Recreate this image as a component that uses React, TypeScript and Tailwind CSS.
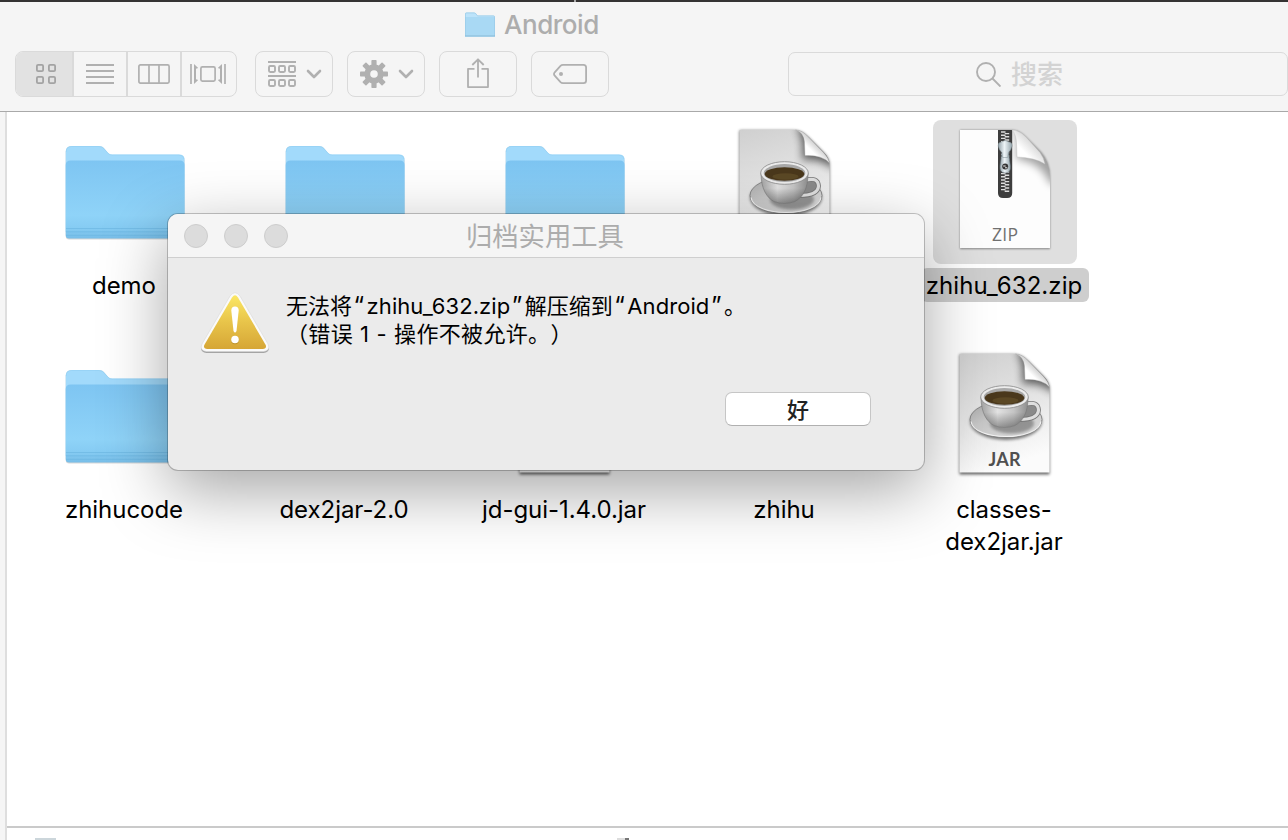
import React, { useId } from "react";

type Kind = "folder" | "jar" | "plain-jar" | "zip";
type Item = { kind: Kind; label: string[]; selected?: boolean };

const items: Item[] = [
  { kind: "folder", label: ["demo"] },
  { kind: "folder", label: [] },
  { kind: "folder", label: [] },
  { kind: "plain-jar", label: [] },
  { kind: "zip", label: ["zhihu_632.zip"], selected: true },
  { kind: "folder", label: ["zhihucode"] },
  { kind: "folder", label: ["dex2jar-2.0"] },
  { kind: "jar", label: ["jd-gui-1.4.0.jar"] },
  { kind: "folder", label: ["zhihu"] },
  { kind: "jar", label: ["classes-", "dex2jar.jar"] },
];

function FolderIcon() {
  const id = useId();
  return (
    <svg width="144" height="144" viewBox="0 0 144 144">
      <defs>
        <linearGradient id={id} x1="0" y1="0" x2="0" y2="1">
          <stop offset="0" stopColor="#7ec5f2" />
          <stop offset="0.7" stopColor="#8fd3f8" />
          <stop offset="0.86" stopColor="#86ccf3" />
          <stop offset="1" stopColor="#78bee8" />
        </linearGradient>
      </defs>
      <path d="M12.700 113V32q0-6 6-6h27q4 0 6 3l3.500 4.500q1.500 1.500 4 1.500H126q5.500 0 5.500 5V116q0 3.500-3.500 3.500H16.200Q12.700 119.500 12.700 116z" fill="#000" opacity=".16" />
      <path d="M12.700 112V32q0-6 6-6h27q4 0 6 3l3.500 4q1.500 1.500 4 1.500H126q5.500 0 5.500 5V112H12.700z" fill="#a2dafb" />
      <path d="M13.200 32q0-5.500 5.500-5.500h27q4 0 6 3l3.500 4q1.500 1.500 4 1.500H126q4.500 0 5 4" fill="none" stroke="#8fcdf1" strokeWidth=".5" />
      <path d="M12.700 45q0-4.500 5-4.500h109q4.800 0 4.800 4.500v70q0 3.500-3.500 3.500H16.200Q12.700 118.500 12.700 115z" fill={`url(#${id})`} />
      <path d="M13 108.500h118.500M13 111.800h118.500M13 115.300h118.500" stroke="#62aedc" strokeWidth=".8" opacity=".6" />
    </svg>
  );
}

function JarIcon({ text }: { text: boolean }) {
  const id = useId();
  return (
    <svg width="144" height="144" viewBox="0 0 144 144">
      <defs>
        <linearGradient id={id + "p"} x1="0" y1="0" x2="0.25" y2="1">
          <stop offset="0" stopColor="#cfcfcf" />
          <stop offset=".5" stopColor="#e3e3e3" />
          <stop offset="1" stopColor="#fbfbfb" />
        </linearGradient>
        <linearGradient id={id + "c"} x1="0" y1="0" x2="1" y2="0">
          <stop offset="0" stopColor="#a2a2a2" />
          <stop offset=".35" stopColor="#e2e2e2" />
          <stop offset=".7" stopColor="#c4c4c4" />
          <stop offset="1" stopColor="#8e8e8e" />
        </linearGradient>
        <linearGradient id={id + "d"} x1="0" y1="0" x2="0" y2="1">
          <stop offset="0" stopColor="#000" stopOpacity="0" />
          <stop offset=".5" stopColor="#000" stopOpacity="0" />
          <stop offset="1" stopColor="#000" stopOpacity=".35" />
        </linearGradient>
        <linearGradient id={id + "s"} x1="0" y1="0" x2=".9" y2="1">
          <stop offset="0" stopColor="#a5a5a5" />
          <stop offset=".4" stopColor="#c6c6c6" />
          <stop offset="1" stopColor="#dddddd" />
        </linearGradient>
        <linearGradient id={id + "f"} x1="0" y1="1" x2=".6" y2=".4">
          <stop offset="0" stopColor="#fff" />
          <stop offset=".7" stopColor="#fff" />
          <stop offset="1" stopColor="#ccc" />
        </linearGradient>
        <filter id={id + "b"} x="-20%" y="-20%" width="140%" height="140%"><feGaussianBlur stdDeviation="1.5" /></filter>
        <filter id={id + "g"} x="-50%" y="-50%" width="200%" height="200%"><feGaussianBlur stdDeviation="4" /></filter>
        <clipPath id={id + "k"}><path d="M26.500 10h56q6 0 13 7l15 15q6 6 6 12v84.500h-90z" /></clipPath>
      </defs>
      <path d="M26.500 10.500h56q6 0 13 7l15 15q6 6 6 12v86h-90z" fill="#000" opacity=".6" filter={`url(#${id}b)`} />
      <g clipPath={`url(#${id}k)`}>
        <path d="M26 9h93v121H26z" fill={`url(#${id}p)`} />
        <path d="M84 6q8 16 5 34 18-3 34 10V6z" fill="#000" opacity=".6" filter={`url(#${id}g)`} />
      </g>
      <path d="M82.500 10q8 2 9 12l.5 13.500q17-1 24.500 7.500-1-5-6-10.500L95.500 17Q89 10 82.500 10z" fill={`url(#${id}f)`} stroke="#aaa" strokeWidth=".4" />
      <ellipse cx="73" cy="77.500" rx="36" ry="18.500" fill="#000" opacity=".5" filter={`url(#${id}b)`} />
      <ellipse cx="73" cy="75.500" rx="36" ry="18" fill={`url(#${id}s)`} stroke="#777" strokeWidth=".8" />
      <path d="M38 77.500c3 20 67 20 70 0" fill="none" stroke="#f2f2f2" strokeWidth="1.200" />
      <ellipse cx="79" cy="79.500" rx="22" ry="10" fill="#444" opacity=".45" filter={`url(#${id}b)`} />
      <path d="M92 60.500q13-4 13.500 5.500-.5 9.500-19 9.500" fill="#8a8a8a" stroke="#777" strokeWidth="4.800" />
      <path d="M92 60.500q13-4 13.500 5.500-.5 9.500-19 9.500" fill="none" stroke="#dedede" strokeWidth="3.200" />
      <path d="M48 53c0 16 6 25 13 28.500q10.500 4 21 0C90 77 95 69 95 53z" fill={`url(#${id}c)`} />
      <path d="M48 53c0 16 6 25 13 28.500q10.500 4 21 0C90 77 95 69 95 53z" fill={`url(#${id}d)`} stroke="#777" strokeWidth=".6" />
      <ellipse cx="71.500" cy="53" rx="23.800" ry="11.300" fill="#ececec" stroke="#888" strokeWidth=".8" />
      <ellipse cx="71.500" cy="53" rx="20.800" ry="9" fill="#a9a9a9" />
      <ellipse cx="71.500" cy="54" rx="19.800" ry="6.800" fill="#4a381c" />
      <ellipse cx="72.500" cy="56.500" rx="13" ry="3.200" fill="#5b4825" />
      {text && <text x="71.500" y="122" textAnchor="middle" fontFamily="Lato" fontWeight="700" fontSize="18" fill="#505050" textLength="32">JAR</text>}
    </svg>
  );
}

function ZipIcon() {
  const id = useId();
  const teeth = Array.from({ length: 19 }, (_, i) => 12 + i * 3.2);
  return (
    <svg width="144" height="144" viewBox="0 0 144 144">
      <defs>
        <filter id={id + "b"} x="-20%" y="-20%" width="140%" height="140%"><feGaussianBlur stdDeviation="1" /></filter>
        <filter id={id + "g"} x="-50%" y="-50%" width="200%" height="200%"><feGaussianBlur stdDeviation="4" /></filter>
        <clipPath id={id + "k"}><path d="M27 10h52q7 0 14 7l15 15q9 10 9 25v71H27z" /></clipPath>
        <linearGradient id={id + "f"} x1="0" y1="1" x2=".6" y2=".4">
          <stop offset="0" stopColor="#fff" />
          <stop offset=".6" stopColor="#fff" />
          <stop offset="1" stopColor="#ddd" />
        </linearGradient>
        <linearGradient id={id + "m"}>
          <stop offset="0" stopColor="#93a1a8" />
          <stop offset=".45" stopColor="#edf4f7" />
          <stop offset="1" stopColor="#94a4ab" />
        </linearGradient>
      </defs>
      <path d="M27 10h52q7 0 14 7l15 15q9 10 9 25v72H27z" fill="#000" opacity=".4" filter={`url(#${id}b)`} />
      <g clipPath={`url(#${id}k)`}>
        <path d="M27 9h92v121H27z" fill="#fdfdfd" />
        <path d="M80 8q7 15 3 31 26 3 34 25h10V8z" fill="#000" opacity=".36" filter={`url(#${id}g)`} />
        <path d="M65 9h14.200v64q0 5-5 5h-4.200q-5 0-5-5z" fill="#3d3d3d" />
        {teeth.map((y, i) => (
          <path key={i} d={`M68 ${y}h4.500M71.700 ${y + 1.6}h4.500`} stroke="#dcdcdc" strokeWidth="1.400" />
        ))}
      </g>
      <path d="M79 10q4 4 4.500 13l.5 14q18 .5 28 7-1-6-5-11.500L93 17Q86 10 79 10z" fill={`url(#${id}f)`} stroke="#bbb" strokeWidth=".4" />
      <path d="M69 32h6.400l2 14q.6 7-5.200 7t-5.200-7z" fill={`url(#${id}m)`} stroke="#637078" strokeWidth=".5" />
      <path d="M65.200 26q-.5-3.500 3-4 3.900-3 7.900 0 3.400.5 3 4-1 4.500-3.700 6.500l-.8 5h-4.900l-.8-5q-2.700-2-3.700-6.500z" fill={`url(#${id}m)`} stroke="#7f8c93" strokeWidth=".5" />
      <circle cx="72.200" cy="46.500" r="3" fill="#353535" />
      <path d="M70.200 46h2.500M72 47.800h2.300" stroke="#eee" strokeWidth="1" />
      <text x="72" y="121" textAnchor="middle" fontFamily="Open Sans" fontSize="17.500" fill="#707070" textLength="26">ZIP</text>
    </svg>
  );
}

function FileCell({ item }: { item: Item }) {
  return (
    <div className="flex h-56 w-[220px] flex-col items-center pt-2">
      <div className={item.selected ? "h-36 w-36 rounded-lg bg-[#dfdfdf]" : "h-36 w-36"}>
        {item.kind === "folder" && <FolderIcon />}
        {item.kind === "jar" && <JarIcon text />}
        {item.kind === "plain-jar" && <JarIcon text={false} />}
        {item.kind === "zip" && <ZipIcon />}
      </div>
      <div
        className={
          "mt-1 whitespace-nowrap rounded-md pr-[7px] pl-[5px] pt-0.5 text-center text-[24px] font-[430] leading-8 text-black " +
          (item.selected ? "h-[34px] bg-[#cecece] tracking-[0.003em]" : "tracking-[-0.002em]")
        }
      >
        {item.label.map((l) => (
          <div key={l}>{l}</div>
        ))}
      </div>
    </div>
  );
}

const btn = "flex h-[46px] w-[78px] items-center rounded-[8px] border border-[#dadada] text-[#b0b0b0]";

function Chevron() {
  return (
    <svg width="16" height="10" viewBox="0 0 16 10" fill="none" stroke="currentColor" strokeWidth="2.600" strokeLinecap="round" strokeLinejoin="round">
      <path d="M2 2l6 6 6-6" />
    </svg>
  );
}

function Toolbar() {
  return (
    <div className="flex h-[61px] pt-2 pl-[15px]">
      <div className="flex h-[46px] w-[222px] overflow-hidden rounded-[8px] border border-[#dadada] text-[#b0b0b0]">
        <div className="flex w-[58px] items-center border-r-2 border-[#dadada] bg-[#e2e2e2] pl-5 text-[#a3a3a3]">
          <svg width="20" height="20" fill="none" stroke="currentColor" strokeWidth="1.800">
            <rect x=".9" y=".9" width="6.200" height="6.200" rx="1.200" />
            <rect x="12.900" y=".9" width="6.200" height="6.200" rx="1.200" />
            <rect x=".9" y="12.900" width="6.200" height="6.200" rx="1.200" />
            <rect x="12.900" y="12.900" width="6.200" height="6.200" rx="1.200" />
          </svg>
        </div>
        <div className="flex w-[54px] items-center border-r-2 border-[#dadada] pl-3">
          <svg width="28" height="20" stroke="currentColor" strokeWidth="1.900"><path d="M0 1h28M0 7h28M0 13h28M0 19h28" /></svg>
        </div>
        <div className="flex w-[54px] items-center border-r-2 border-[#dadada] pl-2.5">
          <svg width="32" height="20" fill="none" stroke="currentColor" strokeWidth="1.700"><rect x=".9" y=".9" width="30.200" height="18.200" rx="1.500" /><path d="M11 1v18M21 1v18" /></svg>
        </div>
        <div className="flex items-center pl-2">
          <svg width="36" height="20" fill="none" stroke="currentColor" strokeWidth="1.700">
            <path d="M1 0v20M35 0v20" />
            <path d="M4 0l4.200 4-2.200.8v10.400l2.200.8L4 20zM32 0l-4.200 4 2.200.8v10.400l-2.200.8L32 20z" fill="currentColor" stroke="none" />
            <rect x="10.900" y="2.900" width="14.200" height="14.200" rx="1.500" />
          </svg>
        </div>
      </div>

      <div className={btn + " ml-[18px] pl-3"}>
        <svg width="28" height="26" fill="none" stroke="currentColor" strokeWidth="1.900">
          <path d="M0 1h28M0 15h28" />
          <rect x="1" y="5" width="6" height="6" rx="1.200" /><rect x="11" y="5" width="6" height="6" rx="1.200" /><rect x="21" y="5" width="6" height="6" rx="1.200" />
          <rect x="1" y="19" width="6" height="6" rx="1.200" /><rect x="11" y="19" width="6" height="6" rx="1.200" /><rect x="21" y="19" width="6" height="6" rx="1.200" />
        </svg>
        <div className="ml-2.5 pt-px"><Chevron /></div>
      </div>

      <div className={btn + " ml-3.5 pl-3"}>
        <svg width="28" height="28" viewBox="-14 -14 28 28">
          <g fill="currentColor">
            {[0, 45, 90, 135].map((a) => (
              <rect key={a} x="-2.600" y="-14" width="5.200" height="28" rx=".8" transform={`rotate(${a})`} />
            ))}
            <circle r="9.700" />
          </g>
          <circle r="3.800" fill="#f5f5f5" />
        </svg>
        <div className="ml-2.5 pt-px"><Chevron /></div>
      </div>

      <div className={btn + " ml-3.5 pl-[27px]"}>
        <svg width="22" height="30" fill="none" stroke="currentColor" strokeWidth="1.800" strokeLinejoin="round" className="-mt-0.5">
          <path d="M7.500 10.900H1v18.200h20V10.900h-6.500M11 19.500V1.500M5.300 7L11 1.300 16.700 7" />
        </svg>
      </div>

      <div className={btn + " ml-3.5 pl-[21px]"}>
        <svg width="34" height="20" fill="none" stroke="currentColor" strokeWidth="1.800">
          <path d="M10 .9h20.500q2.600 0 2.600 2.600v13q0 2.600-2.600 2.600H10q-1.500 0-2.500-1L1.700 11.700q-1.400-1.700 0-3.400L7.500 1.900Q8.500.9 10 .9z" />
          <circle cx="8" cy="10" r="2" fill="currentColor" stroke="none" />
        </svg>
      </div>

      <div className="mt-px ml-[179px] flex h-11 w-[500px] items-center rounded-[7px] border border-[#dadada] pl-[187px] text-[#b0b0b0]">
        <svg width="25" height="25" fill="none" stroke="currentColor" strokeWidth="1.900" className="mt-0.5"><circle cx="10" cy="10" r="9" /><path d="M16.500 16.500l8 8" /></svg>
        <span className="ml-2.5 pt-[3px] text-[26px] font-medium leading-8 text-[#d3d3d3]">搜索</span>
      </div>
    </div>
  );
}

function Quoted({ children }: { children: React.ReactNode }) {
  return (
    <>
      <span className="mr-[2.500px] ml-[1.500px] text-[24px] leading-none">“</span>
      <span className="tracking-[0.003em]">{children}</span>
      <span className="mr-[2.500px] ml-[1.500px] text-[24px] leading-none">”</span>
    </>
  );
}

function Alert() {
  return (
    <div className="absolute top-[214px] left-[168px] h-[256px] w-[756px] rounded-[10px] bg-[#ebebeb] shadow-[0_0_0_1px_rgba(0,0,0,0.22),0_20px_66px_rgba(0,0,0,0.36)]">
      <div className="flex h-11 items-center rounded-t-[10px] border-b border-[#cfcfcf] bg-[#f5f5f5] pl-4">
        <div className="flex gap-4">
          <span className="h-6 w-6 rounded-full border border-[#cdcdcd] bg-[#dcdcdc]" />
          <span className="h-6 w-6 rounded-full border border-[#cdcdcd] bg-[#dcdcdc]" />
          <span className="h-6 w-6 rounded-full border border-[#cdcdcd] bg-[#dcdcdc]" />
        </div>
        <div className="ml-[178px] pt-0.5 text-[26.300px] leading-8 text-[#acacac]">归档实用工具</div>
      </div>
      <div className="flex pt-8 pl-8">
        <svg width="70" height="66" viewBox="0 -1 70 66">
          <defs>
            <linearGradient id="warn" x1="0" y1="0" x2="0" y2="1">
              <stop offset="0" stopColor="#fbe764" />
              <stop offset=".5" stopColor="#e8c44a" />
              <stop offset="1" stopColor="#d6a636" />
            </linearGradient>
          </defs>
          <path d="M30 5.500q5-6.500 10 0L68 54q3 6.500-4.500 7.500h-57Q-1 60.500 2 54z" fill="#000" opacity=".3" transform="translate(0 .6)" />
          <path d="M30 5q5-6.500 10 0L68 53q3 6.500-4.500 7.500h-57Q-1 59.500 2 53z" fill="#fafafa" stroke="#d4d4d4" strokeWidth=".5" />
          <path d="M32 6.500q3-4.500 6 0L65.700 54q1.300 3.500-3 4H7.300q-4.300-.5-3-4z" fill="url(#warn)" />
          <path d="M31.300 19.500q0-4 3.700-4t3.700 4L36.500 40q-1.500 3-3 0z" fill="#fff" />
          <circle cx="35" cy="49.300" r="3.900" fill="#a07a20" opacity=".5" />
          <circle cx="35" cy="48.500" r="3.800" fill="#fff" />
        </svg>
        <div className="ml-4 whitespace-nowrap pt-0.5 text-[22px] font-[430] leading-7 text-black [text-spacing-trim:space-all] [word-spacing:0.600px]">
          <div className="h-7">无法将<Quoted>zhihu_632.zip</Quoted>解压缩到<Quoted>Android</Quoted>。</div>
          <div className="tracking-[0.015em]">（错误 1 - 操作不被允许。）</div>
        </div>
      </div>
      <div className="mt-9 flex justify-end pr-[53px]">
        <button className="h-[34px] w-[146px] rounded-[7px] border border-[#c6c6c6] border-b-[#b0b0b0] bg-white pt-0.5 text-[22px] font-medium leading-7 text-[#222]">好</button>
      </div>
    </div>
  );
}

export default function App() {
  return (
    <div className="relative flex h-[840px] w-[1288px] flex-col overflow-hidden bg-white font-['Inter','Noto_Sans_CJK_SC',sans-serif]">
      <div className="flex h-0.5 bg-[#353333] pl-[574px]"><span className="h-0.5 w-0.5 bg-[#aaa]" /></div>
      <div className="flex h-[110px] flex-col border-b border-[#a9a9a9] bg-[#f5f5f5]">
        <div className="flex h-[41px] items-center pl-[465px]">
          <svg width="30" height="26" viewBox="0 0 30 26" className="mt-1.5">
            <path d="M0 25V2Q0 .5 1.500.5h7.500q1 0 1.800.8l1.700 2.200H28.500Q30 3.500 30 5v20z" fill="#bce3fa" />
            <path d="M0 6q0-1 1-1h28q1 0 1 1v18H0z" fill="#a9d9f4" />
            <path d="M.4 24V2Q.4.900 1.500.900h7.500q1 0 1.800.8l1.700 2.200H28.500q1.100 0 1.100 1.100v19" fill="none" stroke="#98c9e5" strokeWidth=".7" />
            <path d="M0 24h30" stroke="#88b9d4" strokeWidth="1" />
          </svg>
          <span className="ml-[9px] pt-1.5 text-[26px] font-[450] leading-8 tracking-[-0.018em] text-[#adadad]">Android</span>
        </div>
        <div className="h-[69px]"><Toolbar /></div>
      </div>
      <div className="flex flex-1">
        <div className="w-[7px] border-r-2 border-[#dedede] bg-[#f5f5f5]" />
        <div className="flex flex-1 flex-col">
          <div className="flex h-[714px] flex-wrap content-start pr-[100px] pl-2">
            {items.map((it, i) => (
              <FileCell key={i} item={it} />
            ))}
          </div>
          <div className="flex h-3.5 items-end border-t-2 border-[#cacaca]">
            <span className="ml-7 h-0.5 w-[21px] bg-[#ccd6db]" />
            <span className="ml-[561px] h-0.5 w-2 bg-[#ddd]" />
            <span className="h-0.5 w-1 bg-[#777]" />
          </div>
        </div>
      </div>
      <Alert />
    </div>
  );
}
